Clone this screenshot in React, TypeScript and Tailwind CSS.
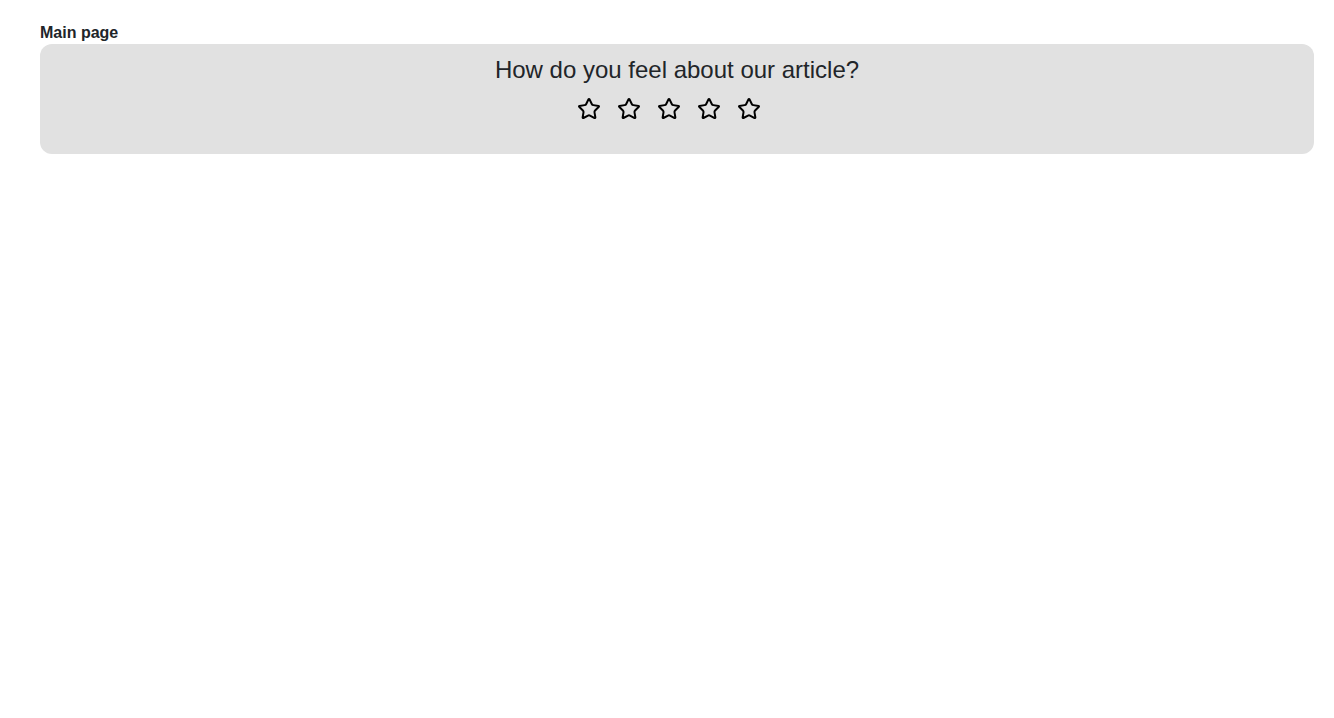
import React, { useState } from 'react';
import { Star } from 'lucide-react';

export default function App() {
  const [rating, setRating] = useState(0);

  return (
    <div className="min-h-screen bg-white pt-[21px] pl-10 pr-5 text-[#212529] font-['Liberation_Sans',Arial,sans-serif]">
      <div className="text-base font-bold leading-[23px]">Main page</div>
      {/* Rating panel */}
      <div className="bg-[#e1e1e1] rounded-xl pt-[11px] pb-[33px] flex flex-col items-center">
        <h2 className="text-2xl leading-[29px]">How do you feel about our article?</h2>
        <div className="flex gap-4 mt-[13px] pr-4">
          {[1, 2, 3, 4, 5].map((s) => (
            <button key={s} onClick={() => setRating(s)} aria-label={`Rate ${s} stars`}>
              <Star
                size={24}
                strokeWidth={2}
                className={s <= rating ? 'text-black fill-yellow-400' : 'text-black'}
              />
            </button>
          ))}
        </div>
      </div>
    </div>
  );
}
